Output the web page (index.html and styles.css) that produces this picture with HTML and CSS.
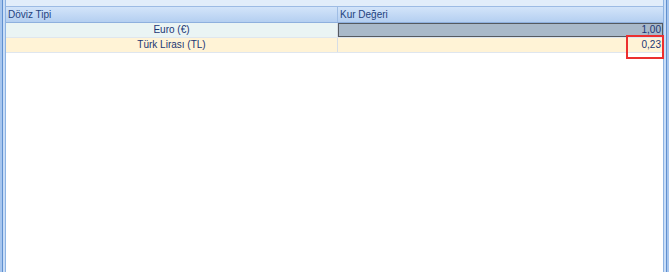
FILE: index.html
```html
<!DOCTYPE html>
<html>
<head>
<meta charset="utf-8">
<link rel="stylesheet" href="styles.css">
</head>
<body>
<div class="frame">
  <div class="edge edge-left"></div>
  <div class="main">
    <div class="topband"></div>
    <div class="grid">
      <div class="row head">
        <div class="cell c1">Döviz Tipi</div>
        <div class="cell c2">Kur Değeri</div>
      </div>
      <div class="row r1">
        <div class="cell c1 center">Euro (€)</div>
        <div class="cell c2 right selected">1,00</div>
      </div>
      <div class="row r2">
        <div class="cell c1 center">Türk Lirası (TL)</div>
        <div class="cell c2 right"><span class="val">0,23</span><span class="mark"></span></div>
      </div>
    </div>
  </div>
  <div class="edge edge-right"></div>
</div>
</body>
</html>
```

FILE: styles.css
```css
html, body {
  margin: 0;
  padding: 0;
  background: #ffffff;
}
body {
  font-family: "Liberation Sans", Arial, sans-serif;
  font-size: 10px;
  color: #1b3673;
}
.frame {
  display: flex;
  width: 669px;
  height: 272px;
}
.edge {
  width: 6px;
  flex: none;
}
.edge-left {
  background: linear-gradient(to right, #a7c6ee 0 2px, #5f8fcf 2px 3px, #c9ddf6 3px 5px, #8db3e3 5px 6px);
}
.edge-right {
  background: linear-gradient(to right, #8db3e3 0 1px, #c9ddf6 1px 3px, #5f8fcf 3px 4px, #a7c6ee 4px 6px);
}
.main {
  flex: 1;
  display: flex;
  flex-direction: column;
  min-width: 0;
}
.topband {
  height: 7px;
  background: #e2edfa;
  border-bottom: 1px solid #9dbbe4;
  box-sizing: border-box;
}
.grid {
  display: flex;
  flex-direction: column;
}
.row {
  display: flex;
  height: 15px;
  box-sizing: border-box;
  border-bottom: 1px solid #dfe6ee;
}
.cell {
  box-sizing: border-box;
  padding: 0 2px;
  line-height: 14px;
  white-space: nowrap;
}
.c1 {
  width: 332px;
  border-right: 1px solid #d6dde6;
}
.c2 {
  flex: 1;
  position: relative;
}
.head {
  height: 16px;
  background: linear-gradient(#d3e4f9, #b4cff1);
  border-bottom: 1px solid #8eb0de;
}
.head .cell {
  line-height: 15px;
  color: #24437f;
}
.head .c1 {
  border-right: 1px solid #9fbde5;
}
.r1 {
  background: #eaf4f4;
}
.r2 {
  background: #fff3d6;
}
.center {
  text-align: center;
}
.right {
  text-align: right;
}
.selected {
  background: #a9b9c9;
  border: 1px solid #555a60;
  line-height: 12px;
  padding-right: 1px;
}
.mark {
  position: absolute;
  right: -1px;
  top: -3px;
  width: 38px;
  height: 24px;
  border: 2px solid #ec2f2f;
  box-sizing: border-box;
}
```
